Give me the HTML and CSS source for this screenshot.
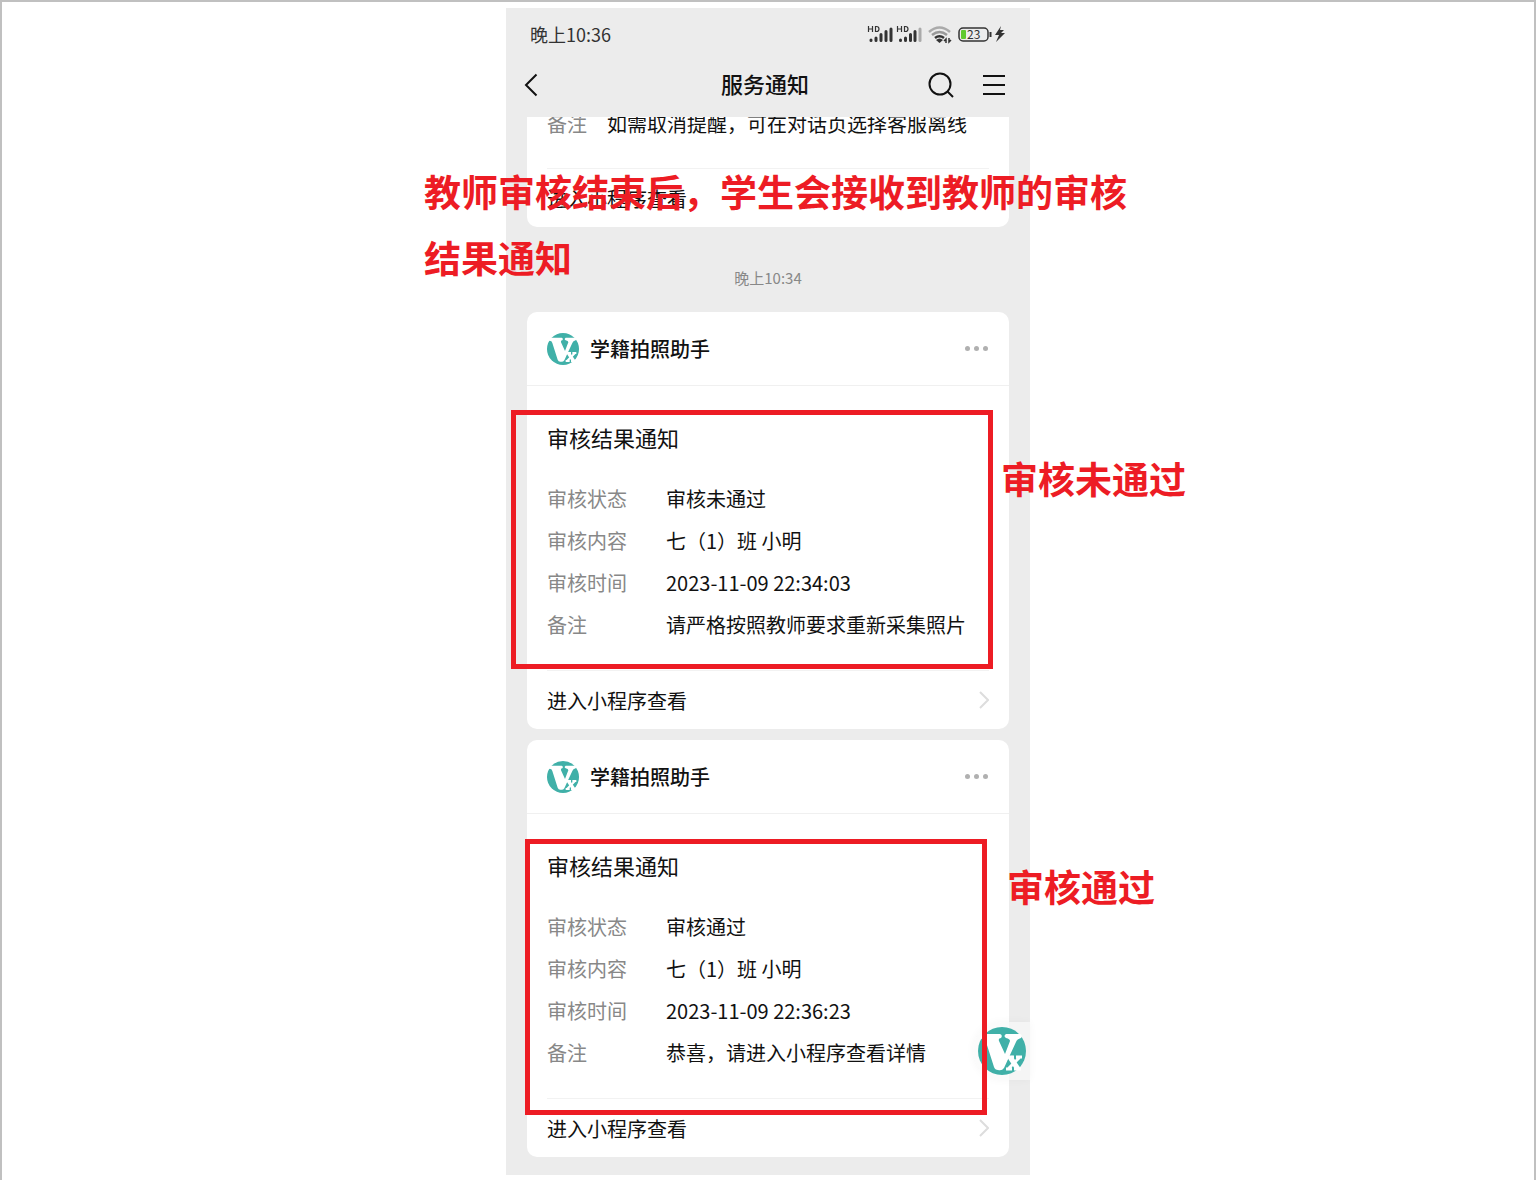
FILE: index.html
```html
<!DOCTYPE html>
<html lang="zh-CN">
<head>
    <meta charset="UTF-8">
    <meta name="viewport" content="width=device-width, initial-scale=1.0">
    <title>服务通知</title>
    <link rel="stylesheet" href="styles.css">
</head>
<body>
    <svg class="defs" aria-hidden="true">
        <symbol id="logo" viewBox="0 0 48 48">
            <circle cx="24" cy="24" r="24" fill="#40b0a8"/>
            <path fill="#fff" d="M3 9Q4 7 7 7H22Q25 8 23 11Q20 11 21 14L27 27L32 14Q32 12 28 11Q25 9 28 7H42Q45 8 43 11Q39 12 38 15L26 41Q24 44 20 43Q17 43 16 40L8 15Q7 11 2 12Z"/>
            <path fill="none" stroke="#40b0a8" stroke-width="8" d="M33 31L40 41M41 31L32 41"/>
            <path fill="none" stroke="#fff" stroke-width="5" d="M32 30L40 42"/>
            <path fill="none" stroke="#fff" stroke-width="3" d="M42 30L30 42M29 30H36M38 30H44M28 42H34M36 42H43"/>
        </symbol>
    </svg>

    <main class="page">
        <div class="phone">
            <header class="top">
                <div class="status">
                    <span class="clock">晚上10:36</span>
                    <svg class="status-icons" width="138" height="20" viewBox="0 0 138 20" aria-hidden="true">
                        <g fill="none" stroke="#333" stroke-width="1.2">
                            <path d="M1.5 2V8M5.5 2V8M1.5 5H5.5M8.5 2.5V7.5H9.5Q12 7.5 12 5T9.5 2.5Z"/>
                            <path d="M30.500 2V8M34.500 2V8M30.500 5H34.500M37.500 2.500V7.500H38.500Q41 7.500 41 5T38.500 2.500Z"/>
                        </g>
                        <g stroke="#333" stroke-width="3" stroke-linecap="round">
                            <path d="M4 16V16.5M9 14V16.5M14 10.5V16.5M19 7.5V16.5M24 5V16.5"/>
                            <path d="M33.5 16V16.5M38.5 14V16.5M43.5 10.5V16.5M48 7.5V16.5"/>
                            <path stroke="#aaa" d="M53 5V16.5"/>
                        </g>
                        <g fill="none" stroke-width="2.5">
                            <path stroke="#aaa" d="M62 8Q72.500 -1 83 8"/>
                            <path stroke="#999" d="M65 11Q72.500 5 80 11"/>
                            <path stroke="#333" d="M68 14Q72.500 10.500 77 14"/>
                        </g>
                        <path fill="#333" d="M69 16Q72.500 13 76 16L72.500 19Z"/>
                        <path fill="none" stroke="#333" stroke-width="1.5" d="M79 19V15L77 17M82 14V18L84 16"/>
                        <rect x="92" y="4" width="29" height="13" rx="4" fill="none" stroke="#333" stroke-width="1.5"/>
                        <rect x="94" y="6" width="5" height="9" rx="1" fill="#5fc92e"/>
                        <path stroke="#333" stroke-width="2" d="M123.500 8V13"/>
                        <text class="battery" x="100" y="15">23</text>
                        <path fill="#333" d="M134 2L128 11H132L129 18L138 9H134L137 6H133Z"/>
                    </svg>
                </div>
                <nav class="nav">
                    <button class="icon-btn" type="button" aria-label="返回">
                        <svg width="14" height="24" viewBox="0 0 14 24"><path d="M12.500 1.500L2 12L12.500 22.500"/></svg>
                    </button>
                    <h1>服务通知</h1>
                    <div class="nav-right">
                        <button class="icon-btn" type="button" aria-label="搜索">
                            <svg width="26" height="26" viewBox="0 0 26 26"><circle cx="12" cy="12" r="10.500"/><path d="M19.500 19.500L25 25"/></svg>
                        </button>
                        <button class="icon-btn" type="button" aria-label="菜单">
                            <svg width="24" height="24" viewBox="0 0 24 24"><path d="M1 3H23M1 12H23M1 21H23"/></svg>
                        </button>
                    </div>
                </nav>
            </header>

            <section class="chat">
                <!-- scrolled half out of view -->
                <article class="card card-cut">
                    <dl class="rows">
                        <div class="row"><dt>备注</dt><dd>如需取消提醒，可在对话页选择客服离线</dd></div>
                    </dl>
                    <a class="enter" href="#">进入小程序查看</a>
                </article>

                <time class="time">晚上10:34</time>

                <article class="card">
                    <header class="card-head">
                        <svg class="logo" aria-hidden="true"><use href="#logo"/></svg>
                        <span class="app">学籍拍照助手</span>
                        <button class="more" type="button" aria-label="更多"><i></i><i></i><i></i></button>
                    </header>
                    <h2>审核结果通知</h2>
                    <dl class="rows">
                        <div class="row"><dt>审核状态</dt><dd>审核未通过</dd></div>
                        <div class="row"><dt>审核内容</dt><dd>七（1）班 小明</dd></div>
                        <div class="row"><dt>审核时间</dt><dd>2023-11-09 22:34:03</dd></div>
                        <div class="row"><dt>备注</dt><dd>请严格按照教师要求重新采集照片</dd></div>
                    </dl>
                    <a class="enter" href="#">进入小程序查看
                        <svg class="arrow" width="10" height="18" viewBox="0 0 10 18" aria-hidden="true"><path d="M1 1L9 9L1 17"/></svg>
                    </a>
                </article>

                <article class="card">
                    <header class="card-head">
                        <svg class="logo" aria-hidden="true"><use href="#logo"/></svg>
                        <span class="app">学籍拍照助手</span>
                        <button class="more" type="button" aria-label="更多"><i></i><i></i><i></i></button>
                    </header>
                    <h2>审核结果通知</h2>
                    <dl class="rows">
                        <div class="row"><dt>审核状态</dt><dd>审核通过</dd></div>
                        <div class="row"><dt>审核内容</dt><dd>七（1）班 小明</dd></div>
                        <div class="row"><dt>审核时间</dt><dd>2023-11-09 22:36:23</dd></div>
                        <div class="row"><dt>备注</dt><dd>恭喜，请进入小程序查看详情</dd></div>
                    </dl>
                    <a class="enter" href="#">进入小程序查看
                        <svg class="arrow" width="10" height="18" viewBox="0 0 10 18" aria-hidden="true"><path d="M1 1L9 9L1 17"/></svg>
                    </a>
                </article>
            </section>

            <button class="float" type="button" aria-label="学籍拍照助手">
                <svg class="logo" aria-hidden="true"><use href="#logo"/></svg>
            </button>

            <!-- red notes over the phone -->
            <p class="note note-top">教师审核结束后，学生会接收到教师的审核结果通知</p>
            <div class="box box-fail"></div>
            <p class="note note-fail">审核未通过</p>
            <div class="box box-pass"></div>
            <p class="note note-pass">审核通过</p>
        </div>
    </main>
</body>
</html>
```
FILE: styles.css
```css
* {
    box-sizing: border-box;
}

body {
    margin: 0;
    background: #fff;
    color: #111;
    font-family: "Noto Sans CJK SC", "Noto Sans", sans-serif;
    font-size: 20px;
}

h1, h2, p, dl, dd {
    margin: 0;
}

button {
    border: 0;
    padding: 0;
    background: none;
    cursor: pointer;
}

.defs {
    position: absolute;
    width: 0;
    height: 0;
}

.page {
    min-height: 100vh;
    padding: 6px 0 5px;
    border: 2px solid #c0c0c0;
    border-bottom: 0;
}

.phone {
    position: relative;
    max-width: 524px;
    margin: 0 auto;
    background: #ececec;
}

/* header */
.top {
    padding-bottom: 7px;
}

.status {
    display: flex;
    align-items: center;
    justify-content: space-between;
    height: 52px;
    padding: 0 25px 0 24px;
}

.clock {
    font-size: 18px;
    color: #333;
}

.battery {
    font-size: 12px;
    fill: #333;
}

.nav {
    display: grid;
    grid-template-columns: 1fr auto 1fr;
    align-items: center;
    height: 50px;
    padding: 0 24px 0 18px;
}

.nav h1 {
    padding-bottom: 4px;
    font-size: 22px;
    font-weight: 500;
}

.nav-right {
    display: flex;
    justify-content: flex-end;
    gap: 28px;
}

.icon-btn {
    display: flex;
    align-items: center;
}

.icon-btn svg {
    fill: none;
    stroke: #111;
    stroke-width: 2;
}

/* messages */
.chat {
    display: flex;
    flex-direction: column;
    gap: 11px;
    padding: 0 21px 18px;
    overflow: hidden;
}

.card {
    border-radius: 10px;
    background: #fff;
}

.card-cut {
    margin-top: -14px;
}

.card-cut .rows {
    padding-bottom: 23px;
}

.card-cut dt {
    flex-basis: 60px;
}

.time {
    margin: 31px 0 14px;
    font-size: 15px;
    line-height: 18px;
    text-align: center;
    color: #888;
}

.card-head {
    display: flex;
    align-items: center;
    height: 74px;
    padding: 0 21px 0 20px;
    border-bottom: 1px solid #f0f0f0;
}

.logo {
    width: 32px;
    height: 32px;
}

.app {
    margin-left: 11px;
    font-weight: 500;
}

.more {
    display: flex;
    gap: 4px;
    margin-left: auto;
}

.more i {
    width: 5px;
    height: 5px;
    border-radius: 50%;
    background: #b0b0b0;
}

.card h2 {
    padding: 34px 20px 24px;
    font-size: 22px;
    font-weight: 400;
    line-height: 34px;
}

.rows {
    padding: 0 20px 24px;
}

.row {
    display: flex;
    line-height: 42px;
}

dt {
    flex: 0 0 119px;
    color: #888;
}

.enter {
    display: flex;
    align-items: center;
    justify-content: space-between;
    height: 59px;
    margin: 0 20px;
    border-top: 1px solid #f2f2f2;
    color: #111;
    text-decoration: none;
}

.arrow {
    fill: none;
    stroke: #ddd;
    stroke-width: 2;
}

.float {
    position: absolute;
    right: 0;
    bottom: 95px;
    display: flex;
    align-items: center;
    width: 57px;
    height: 58px;
    padding-left: 5px;
    border-radius: 29px 0 0 29px;
    background: rgba(250, 250, 250, 0.7);
    box-shadow: 0 0 8px rgba(0, 0, 0, 0.04);
}

.float .logo {
    width: 48px;
    height: 48px;
}

/* red notes */
.note {
    position: absolute;
    color: #ed1c24;
    font-size: 37px;
    font-weight: 700;
    line-height: 66px;
    white-space: nowrap;
}

.note-top {
    top: 150px;
    left: -82px;
    width: 704px;
    white-space: normal;
}

.note-fail {
    top: 437px;
    left: 495px;
}

.note-pass {
    top: 845px;
    left: 501px;
}

.box {
    position: absolute;
    border: 5px solid #ed1c24;
    pointer-events: none;
}

.box-fail {
    top: 402px;
    left: 5px;
    width: 482px;
    height: 259px;
}

.box-pass {
    top: 831px;
    left: 19px;
    width: 462px;
    height: 276px;
}
```
